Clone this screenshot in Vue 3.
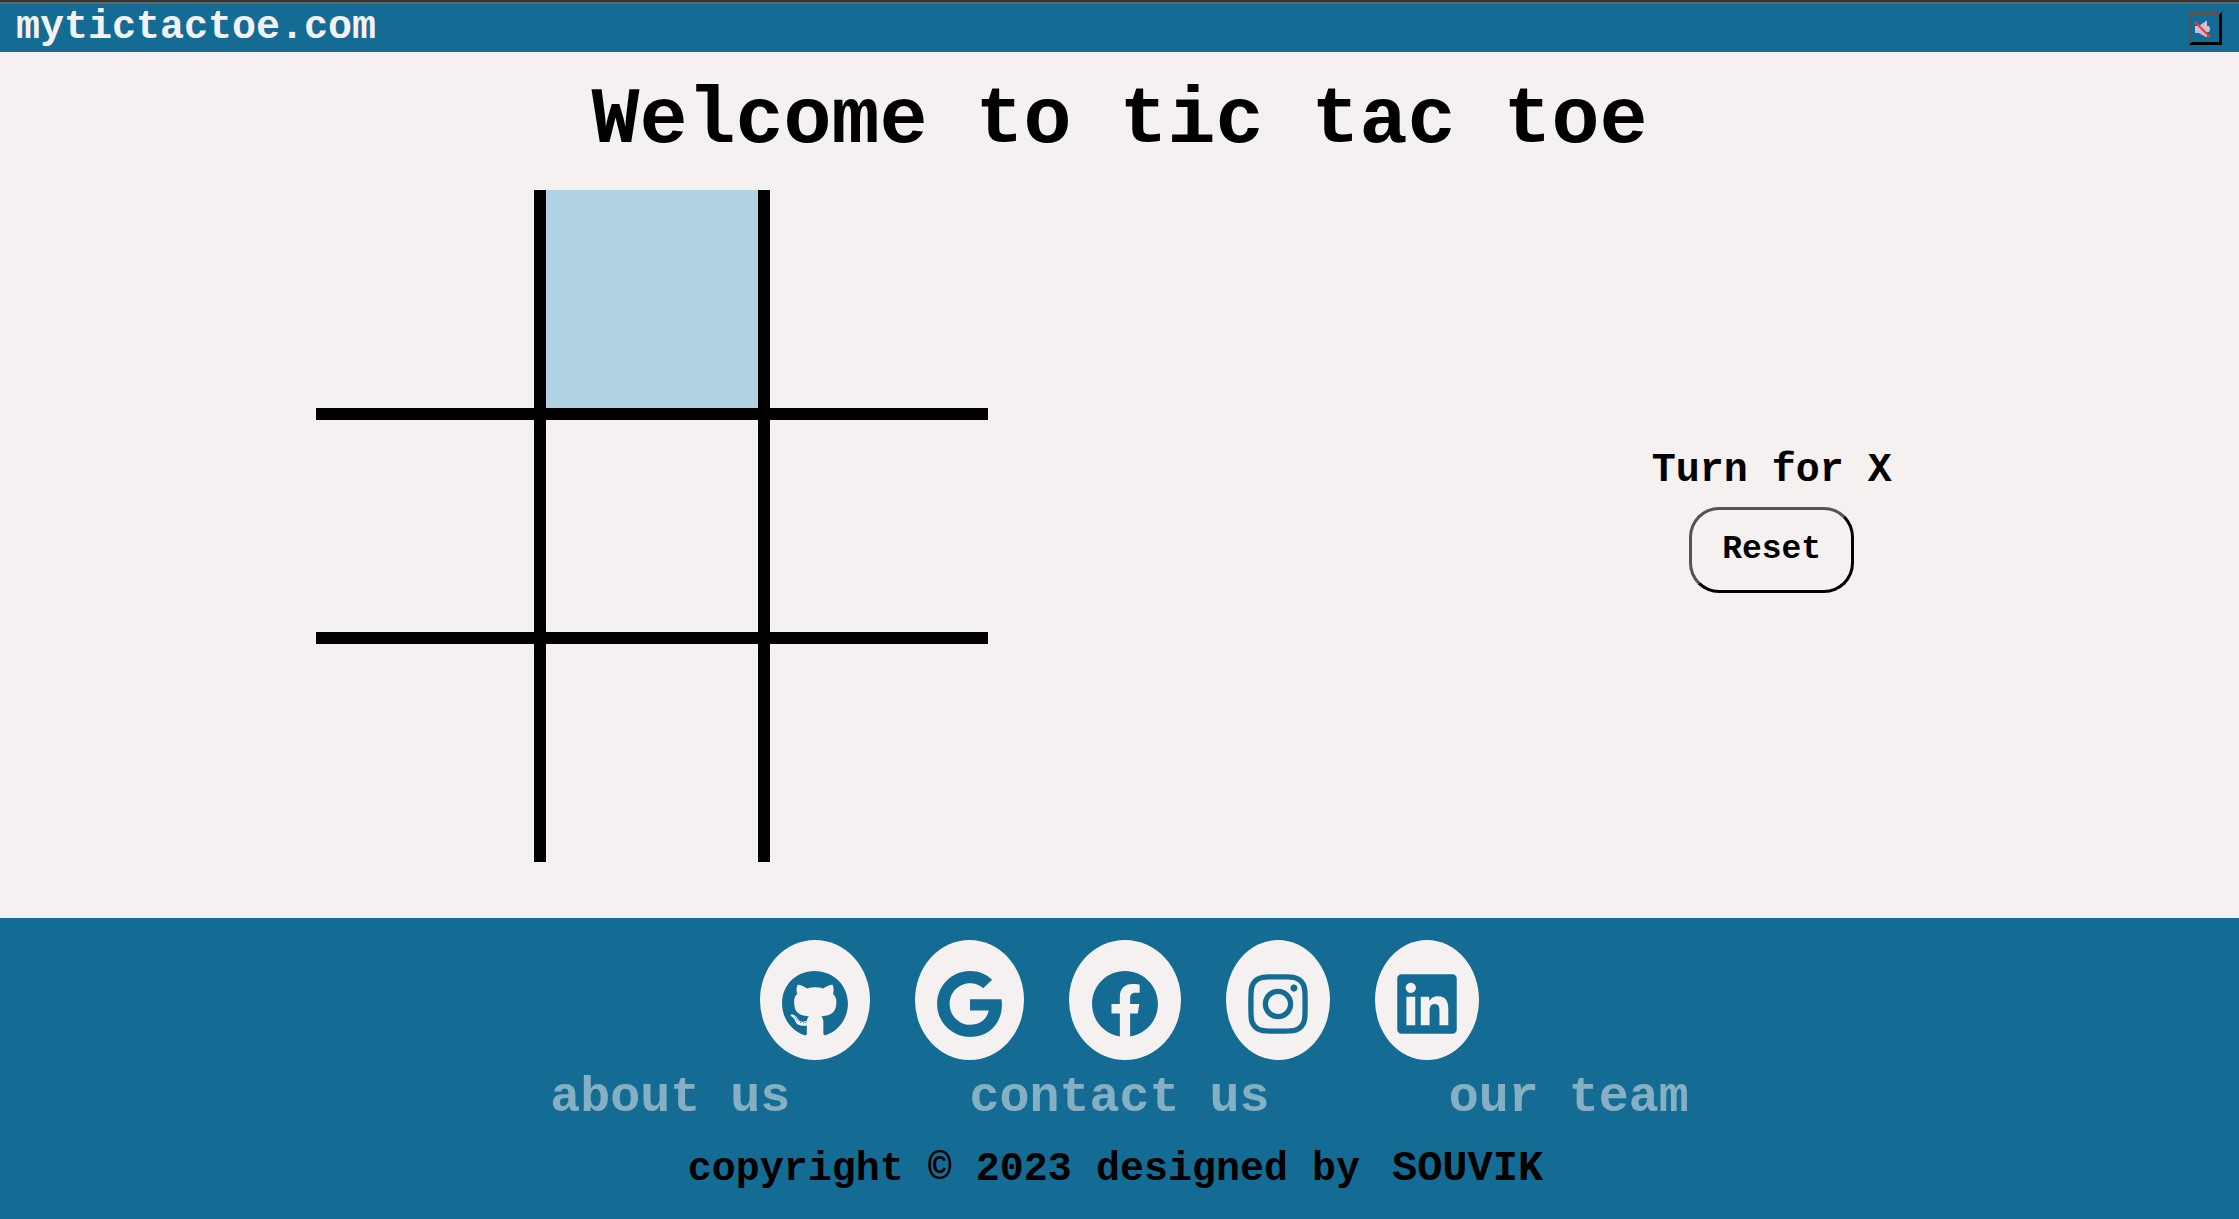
<script setup>
import { ref } from 'vue'

const cells = ref(Array(9).fill(''))
const turn = ref('X')

function play(i) {
  if (cells.value[i]) return
  cells.value[i] = turn.value
  turn.value = turn.value === 'X' ? 'O' : 'X'
}

function reset() {
  cells.value = Array(9).fill('')
  turn.value = 'X'
}

const socials = [
  {
    name: 'GitHub',
    box: '0 0 496 512',
    w: 66,
    path: 'M165.9 397.4c0 2-2.3 3.6-5.2 3.6-3.3.3-5.6-1.3-5.6-3.6 0-2 2.3-3.6 5.2-3.6 3-.3 5.6 1.3 5.6 3.6zm-31.1-4.5c-.7 2 1.3 4.3 4.3 4.9 2.6 1 5.6 0 6.2-2s-1.3-4.3-4.3-5.2c-2.6-.7-5.5.3-6.2 2.3zm44.2-1.7c-2.9.7-4.9 2.6-4.6 4.9.3 2 2.9 3.3 5.9 2.6 2.9-.7 4.9-2.6 4.6-4.6-.3-1.9-3-3.2-5.9-2.9zM244.8 8C106.1 8 0 113.3 0 252c0 110.9 69.8 205.8 169.5 239.2 12.8 2.3 17.3-5.6 17.3-12.1 0-6.2-.3-40.4-.3-61.4 0 0-70 15-84.7-29.8 0 0-11.4-29.1-27.8-36.6 0 0-22.9-15.7 1.6-15.4 0 0 24.9 2 38.6 25.8 21.9 38.6 58.6 27.5 72.9 20.9 2.3-16 8.8-27.1 16-33.7-55.9-6.2-112.3-14.3-112.3-110.5 0-27.5 7.6-41.3 23.6-58.9-2.6-6.5-11.1-33.3 2.6-67.9 20.9-6.5 69 27 69 27 20-5.6 41.5-8.5 62.8-8.5s42.8 2.9 62.8 8.5c0 0 48.1-33.6 69-27 13.7 34.7 5.2 61.4 2.6 67.9 16 17.7 25.8 31.5 25.8 58.9 0 96.5-58.9 104.2-114.8 110.5 9.2 7.9 17 22.9 17 46.4 0 33.7-.3 75.4-.3 83.6 0 6.5 4.6 14.4 17.3 12.1C428.2 457.8 496 362.9 496 252 496 113.3 383.5 8 244.8 8zM97.2 352.9c-1.3 1-1 3.3.7 5.2 1.6 1.6 3.9 2.3 5.2 1 1.3-1 1-3.3-.7-5.2-1.6-1.6-3.9-2.3-5.2-1zm-10.8-8.1c-.7 1.3.3 2.9 2.3 3.9 1.6 1 3.6.7 4.3-.7.7-1.3-.3-2.9-2.3-3.9-2-.6-3.6-.3-4.3.7zm32.4 35.6c-1.6 1.3-1 4.3 1.3 6.2 2.3 2.3 5.2 2.6 6.5 1 1.3-1.3.7-4.3-1.3-6.2-2.2-2.3-5.2-2.6-6.5-1zm-11.4-14.7c-1.6 1-1.6 3.6 0 5.9 1.6 2.3 4.3 3.3 5.6 2.3 1.6-1.3 1.6-3.9 0-6.2-1.4-2.3-4-3.3-5.6-2z'
  },
  {
    name: 'Google',
    box: '0 0 488 512',
    w: 65,
    path: 'M488 261.8C488 403.3 391.1 504 248 504 110.8 504 0 393.2 0 256S110.8 8 248 8c66.8 0 123 24.5 166.3 64.9l-67.5 64.9C258.5 52.6 94.3 116.6 94.3 256c0 86.5 69.1 156.6 153.7 156.6 98.2 0 135-70.4 140.8-106.9H248v-85.3h236.1c2.3 12.7 3.9 24.9 3.9 41.4z'
  },
  {
    name: 'Facebook',
    box: '0 0 512 512',
    w: 68,
    path: 'M504 256C504 119 393 8 256 8S8 119 8 256c0 123.78 90.69 226.38 209.25 245V327.69h-63V256h63v-54.64c0-62.15 37-96.48 93.67-96.48 27.14 0 55.52 4.84 55.52 4.84v61h-31.28c-30.8 0-40.41 19.12-40.41 38.73V256h68.78l-11 71.69h-57.78V501C413.31 482.38 504 379.78 504 256z'
  },
  {
    name: 'Instagram',
    box: '0 0 448 512',
    w: 60,
    path: 'M224.1 141c-63.6 0-114.9 51.3-114.9 114.9s51.3 114.9 114.9 114.9S339 319.5 339 255.9 287.7 141 224.1 141zm0 189.6c-41.1 0-74.7-33.5-74.7-74.7s33.5-74.7 74.7-74.7 74.7 33.5 74.7 74.7-33.6 74.7-74.7 74.7zm146.4-194.3c0 14.9-12 26.8-26.8 26.8-14.9 0-26.8-12-26.8-26.8s12-26.8 26.8-26.8 26.8 12 26.8 26.8zm76.1 27.2c-1.7-35.9-9.9-67.7-36.2-93.9-26.2-26.2-58-34.4-93.9-36.2-37-2.1-147.9-2.1-184.9 0-35.8 1.7-67.6 9.9-93.9 36.1s-34.4 58-36.2 93.9c-2.1 37-2.1 147.9 0 184.9 1.7 35.9 9.9 67.7 36.2 93.9s58 34.4 93.9 36.2c37 2.1 147.9 2.1 184.9 0 35.9-1.7 67.7-9.9 93.9-36.2 26.2-26.2 34.4-58 36.2-93.9 2.1-37 2.1-147.8 0-184.8zM398.8 388c-7.8 19.6-22.9 34.7-42.6 42.6-29.5 11.7-99.5 9-132.1 9s-102.7 2.6-132.1-9c-19.6-7.8-34.7-22.9-42.6-42.6-11.7-29.5-9-99.5-9-132.1s-2.6-102.7 9-132.1c7.8-19.6 22.9-34.7 42.6-42.6 29.5-11.7 99.5-9 132.1-9s102.7-2.6 132.1 9c19.6 7.8 34.7 22.9 42.6 42.6 11.7 29.5 9 99.5 9 132.1s2.7 102.7-9 132.1z'
  },
  {
    name: 'LinkedIn',
    box: '0 0 448 512',
    w: 60,
    path: 'M416 32H31.9C14.3 32 0 46.5 0 64.3v383.4C0 465.5 14.3 480 31.9 480H416c17.6 0 32-14.5 32-32.3V64.3c0-17.8-14.4-32.3-32-32.3zM135.4 416H69V202.2h66.5V416zm-33.2-243c-21.3 0-38.5-17.3-38.5-38.5S80.9 96 102.2 96c21.2 0 38.5 17.3 38.5 38.5 0 21.3-17.2 38.5-38.5 38.5zm282.1 243h-66.4V312c0-24.8-.5-56.7-34.5-56.7-34.6 0-39.9 27-39.9 54.9V416h-66.4V202.2h63.7v29.2h.9c8.9-16.8 30.6-34.5 62.9-34.5 67.2 0 79.7 44.3 79.7 101.9V416z'
  }
]

const links = ['about us', 'contact us', 'our team']
</script>

<template>
  <div class="page">
    <header class="bar">
      <span class="brand">mytictactoe.com</span>
      <button class="mute" type="button" aria-label="Toggle sound">
        <svg width="16" height="17" viewBox="0 0 16 17" aria-hidden="true">
          <path d="M0 5h4l7-5h1v5h2q2 3 0 6h-2v5h-1l-7-4H0z" fill="#cbbfd8" />
          <path d="M0 1l15 15" stroke="#ee3a3a" stroke-width="2" />
        </svg>
      </button>
    </header>

    <main>
      <h1>Welcome to tic tac toe</h1>
      <div class="game">
        <div class="board">
          <button
            v-for="(cell, i) in cells"
            :key="i"
            type="button"
            class="cell"
            :class="{ active: i === 1 }"
            :aria-label="`Cell ${i + 1}`"
            @click="play(i)"
          >{{ cell }}</button>
        </div>
        <div class="info">
          <p class="turn">Turn for {{ turn }}</p>
          <button class="reset" type="button" @click="reset">Reset</button>
        </div>
      </div>
    </main>

    <footer>
      <div class="socials">
        <a v-for="s in socials" :key="s.name" href="#" class="social" :aria-label="s.name">
          <svg :width="s.w" height="68" :viewBox="s.box" aria-hidden="true">
            <path :d="s.path" fill="currentColor" />
          </svg>
        </a>
      </div>
      <nav class="links">
        <a v-for="l in links" :key="l" href="#">{{ l }}</a>
      </nav>
      <p class="copy">copyright © 2023 designed by <span class="author">SOUVIK</span></p>
    </footer>
  </div>
</template>

<style>
body {
  margin: 0;
  background: #f6f1f1;
}
</style>

<style scoped>
.page {
  display: flex;
  flex-direction: column;
  min-height: 100vh;
  box-sizing: border-box;
  border-top: 2px solid #333;
  color: #000;
  font-family: "Liberation Mono", monospace;
  font-weight: 700;
}

.page * {
  box-sizing: border-box;
}

button {
  font: inherit;
  color: inherit;
  background: transparent;
  cursor: pointer;
}

.bar {
  display: flex;
  justify-content: space-between;
  height: 50px;
  padding: 0 17px 0 16px;
  border-top: 2px solid #666;
  background: #146c94;
}

.brand {
  color: #f6f1f1;
  font-size: 40px;
  line-height: 48px;
}

.mute {
  display: flex;
  align-items: center;
  width: 33px;
  height: 33px;
  margin-top: 8px;
  padding: 2px 0 0 3px;
  border: 3px outset #000;
}

main {
  flex: 1;
}

h1 {
  margin: 24px 0;
  font-size: 80px;
  line-height: 90px;
  text-align: center;
}

.game {
  display: flex;
  justify-content: space-around;
}

.board {
  display: grid;
  grid-template-columns: repeat(3, 10vw);
  grid-auto-rows: 10vw;
}

.cell {
  padding: 0;
  border: 0 solid #000;
  font-size: 100px;
}

.cell:nth-child(3n + 1),
.cell:nth-child(3n + 2) {
  border-right-width: 6px;
}

.cell:nth-child(3n + 2),
.cell:nth-child(3n) {
  border-left-width: 6px;
}

.cell:nth-child(-n + 6) {
  border-bottom-width: 6px;
}

.cell:nth-child(n + 4) {
  border-top-width: 6px;
}

.active {
  background: #afd3e2;
}

.info {
  display: flex;
  flex-direction: column;
  align-items: center;
  justify-content: center;
  gap: 12px;
  width: 302px;
  padding-bottom: 12px;
}

.turn {
  margin: 0;
  font-size: 40px;
  line-height: 48px;
}

.reset {
  height: 86px;
  padding: 0 30px;
  border: 3px outset #000;
  border-radius: 30px;
  font-size: 33px;
}

footer {
  display: flex;
  flex-direction: column;
  align-items: center;
  padding: 22px 0 25px;
  background: #146c94;
}

.socials {
  display: flex;
  gap: 2vw;
}

.social {
  display: flex;
  padding: 30px 22px 22px;
  border-radius: 50%;
  background: #f6f1f1;
  color: #146c94;
}

.links {
  display: flex;
  gap: 8vw;
  margin-top: 12px;
  font-size: 50px;
  line-height: 52px;
}

.links a {
  color: #f6f1f1;
  opacity: 0.5;
  text-decoration: none;
}

.copy {
  margin: 21px 0 0;
  font-size: 40px;
  line-height: 48px;
}

.author {
  margin: 0 8px;
  font-size: 42px;
}
</style>
